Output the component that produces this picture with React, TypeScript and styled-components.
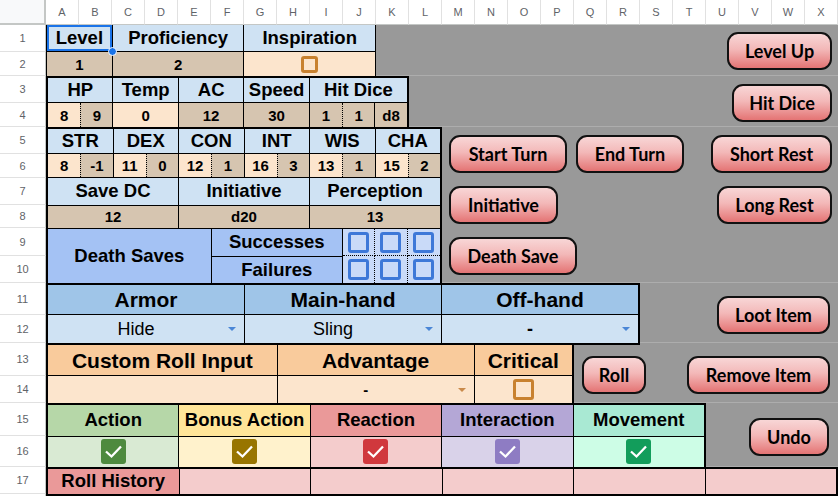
import styled, { createGlobalStyle } from "styled-components";

const GlobalStyle = createGlobalStyle`
  html, body {
    margin: 0;
    padding: 0;
    background: #fff;
  }
  body {
    font-family: "Liberation Sans", Arial, sans-serif;
    color: #000;
  }
`;

const COLUMNS = "ABCDEFGHIJKLMNOPQRSTUVWX".split("");
const ROW_HEIGHTS = [27, 24, 27, 24, 27, 24, 27, 23, 28, 27, 32, 28, 33, 27, 33, 31, 27, 27];

const HEAD_BLUE = "#cfe2f3";
const TAN = "#d6c5b0";
const PEACH = "#fce5cd";
const DEATH_BLUE = "#a4c2f4";
const PALE_BLUE = "#c9daf8";

const Sheet = styled.div`
  display: grid;
  grid-template-columns: 46px repeat(24, 33px);
  grid-template-rows: 25px ${ROW_HEIGHTS.map((h) => `${h}px`).join(" ")};
  width: 838px;
  height: 496px;
  overflow: hidden;
  background: #fff;
`;

const Corner = styled.div`
  grid-column: 1;
  grid-row: 1;
  background: #f8f9fa;
  border-right: 2px solid #c4c7c5;
  border-bottom: 2px solid #c4c7c5;
`;

const ColHead = styled.div<{ $col: number }>`
  grid-column: ${(p) => p.$col + 1};
  grid-row: 1;
  display: flex;
  align-items: center;
  justify-content: center;
  font-size: 11px;
  color: #5f6368;
  border-right: 1px solid #e1e1e1;
  border-bottom: 1px solid #c4c7c5;
`;

const RowHead = styled.div<{ $row: number }>`
  grid-column: 1;
  grid-row: ${(p) => p.$row + 1};
  display: flex;
  align-items: center;
  justify-content: center;
  font-size: 11px;
  color: #5f6368;
  border-right: 1px solid #c4c7c5;
  border-bottom: 1px solid #e1e1e1;
`;

type Area = { $col: number; $span: number; $row: number; $rows?: number };

const Band = styled.div<Area & { $tracks: string; $thin?: boolean; $z?: number }>`
  grid-column: ${(p) => p.$col + 1} / span ${(p) => p.$span};
  grid-row: ${(p) => p.$row + 1} / span ${(p) => p.$rows ?? 1};
  position: relative;
  z-index: ${(p) => p.$z ?? 1};
  display: grid;
  grid-template-columns: repeat(${(p) => p.$span}, minmax(0, 1fr));
  grid-template-rows: ${(p) => p.$tracks};
  gap: 1px;
  background: #000;
  border: solid #000;
  border-width: ${(p) => (p.$thin ? "0 1px" : "2px 2px 0")};
  box-shadow: 0 2px 0 #000;
`;

const Cell = styled.div<{
  $c: number;
  $cs?: number;
  $r?: number;
  $rs?: number;
  $bg: string;
  $size?: number;
  $regular?: boolean;
  $pr?: number;
}>`
  grid-column: ${(p) => p.$c} / span ${(p) => p.$cs ?? 1};
  grid-row: ${(p) => p.$r ?? 1} / span ${(p) => p.$rs ?? 1};
  position: relative;
  display: flex;
  align-items: center;
  justify-content: center;
  min-width: 0;
  padding-right: ${(p) => p.$pr ?? 0}px;
  background: ${(p) => p.$bg};
  font-size: ${(p) => p.$size ?? 18.5}px;
  font-weight: ${(p) => (p.$regular ? 400 : 700)};
  line-height: 1;
  white-space: nowrap;
`;

const SelectedCell = styled(Cell)`
  z-index: 3;
  box-shadow: inset 0 0 0 2px #1a73e8;

  &::after {
    content: "";
    position: absolute;
    right: -5px;
    bottom: -5px;
    width: 7px;
    height: 7px;
    border-radius: 50%;
    background: #1a73e8;
    border: 1px solid #fff;
  }
`;

const Pair = styled.div<{ $c: number; $r?: number }>`
  grid-column: ${(p) => p.$c} / span 2;
  grid-row: ${(p) => p.$r ?? 1};
  display: grid;
  grid-template-columns: 1fr 1fr;
`;

const Half = styled.div<{ $bg: string }>`
  display: flex;
  align-items: center;
  justify-content: center;
  background: ${(p) => p.$bg};
  font-size: 15px;
  font-weight: 700;

  & + & {
    border-left: 1px dotted #000;
  }
`;

const Arrow = styled.span<{ $color: string }>`
  position: absolute;
  right: 8px;
  top: 50%;
  margin-top: -2px;
  border-left: 4px solid transparent;
  border-right: 4px solid transparent;
  border-top: 4px solid ${(p) => p.$color};
`;

const Box = styled.span<{ $size: number; $color: string; $fill?: string }>`
  display: block;
  box-sizing: border-box;
  width: ${(p) => p.$size}px;
  height: ${(p) => p.$size}px;
  border: 3px solid ${(p) => p.$color};
  border-radius: 3px;
  background: ${(p) => p.$fill ?? "transparent"};
`;

const Tick = styled.span<{ $color: string }>`
  display: flex;
  align-items: center;
  justify-content: center;
  width: 25px;
  height: 25px;
  border-radius: 3px;
  background: ${(p) => p.$color};
`;

const SaveGrid = styled.div`
  grid-column: 10 / span 3;
  grid-row: 5 / span 2;
  display: grid;
  grid-template-columns: repeat(3, 1fr);
  grid-template-rows: 28fr 27fr;
  background: ${PALE_BLUE};
`;

const SaveSlot = styled.div`
  display: flex;
  align-items: center;
  justify-content: center;
  border-right: 1px dotted #000;
  border-bottom: 1px dotted #000;

  &:nth-child(3n) {
    border-right: none;
  }
  &:nth-child(n + 4) {
    border-bottom: none;
  }
`;

const Gray = styled.div<Area & { $pad?: string; $justify?: string }>`
  grid-column: ${(p) => p.$col + 1} / span ${(p) => p.$span};
  grid-row: ${(p) => p.$row + 1} / span ${(p) => p.$rows ?? 1};
  display: flex;
  align-items: center;
  justify-content: ${(p) => p.$justify ?? "flex-end"};
  box-sizing: border-box;
  padding: ${(p) => p.$pad ?? "0 6px"};
  background: #999;
  border-bottom: 1px solid #adadad;
`;

const Panel = styled(Gray)`
  flex-direction: column;
  align-items: stretch;
  justify-content: flex-start;
  gap: 13px;
`;

const BtnRow = styled.div`
  display: flex;
  gap: 9px;
`;

const Spacer = styled.div`
  flex: 1;
`;

const Btn = styled.button<{ $w: number }>`
  width: ${(p) => p.$w}px;
  height: 38px;
  flex: none;
  box-sizing: border-box;
  padding: 0;
  border: 2px solid #111;
  border-radius: 11px;
  background: linear-gradient(to bottom, #f8d6d6 0%, #f3b8b8 45%, #e47474 100%);
  font-family: Lato, "Open Sans", sans-serif;
  font-size: 18px;
  font-weight: 700;
  color: #000;
  cursor: pointer;
`;

const Check = () => (
  <svg width="25" height="25" viewBox="0 0 25 25">
    <polyline points="5,12.5 10.5,17.5 20,7.5" fill="none" stroke="#fff" strokeWidth="2.3" />
  </svg>
);

const TURN = [
  { label: "Action", head: "#b6d7a8", body: "#d9ead3", tick: "#4e8a3e" },
  { label: "Bonus Action", head: "#ffe599", body: "#fff2cc", tick: "#987500" },
  { label: "Reaction", head: "#ea9999", body: "#f4cccc", tick: "#d0383d" },
  { label: "Interaction", head: "#b4a7d6", body: "#d9d2e9", tick: "#8e7cc3" },
  { label: "Movement", head: "#a9e9d3", body: "#cdfde6", tick: "#129d5b" },
];

const ABILITIES = [
  ["STR", "8", "-1"],
  ["DEX", "11", "0"],
  ["CON", "12", "1"],
  ["INT", "16", "3"],
  ["WIS", "13", "1"],
  ["CHA", "15", "2"],
];

export default function App() {
  return (
    <>
      <GlobalStyle />
      <Sheet>
        <Corner />
        {COLUMNS.map((c, i) => (
          <ColHead key={c} $col={i + 1}>
            {c}
          </ColHead>
        ))}
        {ROW_HEIGHTS.map((_, i) => (
          <RowHead key={i} $row={i + 1}>
            {i < 17 ? i + 1 : ""}
          </RowHead>
        ))}

        {/* rows 1-2 */}
        <Band $col={1} $span={10} $row={1} $rows={2} $tracks="27fr 24fr" $thin $z={2}>
          <SelectedCell $c={1} $cs={2} $bg={HEAD_BLUE}>Level</SelectedCell>
          <Cell $c={3} $cs={4} $bg={HEAD_BLUE}>Proficiency</Cell>
          <Cell $c={7} $cs={4} $bg={HEAD_BLUE}>Inspiration</Cell>
          <Cell $c={1} $cs={2} $r={2} $bg={TAN} $size={15}>1</Cell>
          <Cell $c={3} $cs={4} $r={2} $bg={TAN} $size={15}>2</Cell>
          <Cell $c={7} $cs={4} $r={2} $bg={PEACH}>
            <Box $size={17} $color="#c8812f" />
          </Cell>
        </Band>
        <Gray $col={11} $span={14} $row={1} $rows={2} $pad="1px 6px 0">
          <Btn $w={105}>Level Up</Btn>
        </Gray>

        {/* rows 3-4 */}
        <Band $col={1} $span={11} $row={3} $rows={2} $tracks="25fr 24fr">
          <Cell $c={1} $cs={2} $bg={HEAD_BLUE}>HP</Cell>
          <Cell $c={3} $cs={2} $bg={HEAD_BLUE}>Temp</Cell>
          <Cell $c={5} $cs={2} $bg={HEAD_BLUE}>AC</Cell>
          <Cell $c={7} $cs={2} $bg={HEAD_BLUE}>Speed</Cell>
          <Cell $c={9} $cs={3} $bg={HEAD_BLUE}>Hit Dice</Cell>
          <Pair $c={1} $r={2}>
            <Half $bg={PEACH}>8</Half>
            <Half $bg={TAN}>9</Half>
          </Pair>
          <Cell $c={3} $cs={2} $r={2} $bg={PEACH} $size={15}>0</Cell>
          <Cell $c={5} $cs={2} $r={2} $bg={TAN} $size={15}>12</Cell>
          <Cell $c={7} $cs={2} $r={2} $bg={TAN} $size={15}>30</Cell>
          <Pair $c={9} $r={2}>
            <Half $bg={TAN}>1</Half>
            <Half $bg={TAN}>1</Half>
          </Pair>
          <Cell $c={11} $r={2} $bg={TAN} $size={15}>d8</Cell>
        </Band>
        <Gray $col={12} $span={13} $row={3} $rows={2} $pad="3px 6px 0">
          <Btn $w={100}>Hit Dice</Btn>
        </Gray>

        {/* rows 5-10 */}
        <Band $col={1} $span={12} $row={5} $rows={6} $tracks="25fr 24fr 27fr 23fr 28fr 27fr">
          {ABILITIES.map(([name], i) => (
            <Cell key={name} $c={i * 2 + 1} $cs={2} $bg={HEAD_BLUE}>
              {name}
            </Cell>
          ))}
          {ABILITIES.map(([name, score, mod], i) => (
            <Pair key={name} $c={i * 2 + 1} $r={2}>
              <Half $bg={PEACH}>{score}</Half>
              <Half $bg={TAN}>{mod}</Half>
            </Pair>
          ))}
          <Cell $c={1} $cs={4} $r={3} $bg={HEAD_BLUE}>Save DC</Cell>
          <Cell $c={5} $cs={4} $r={3} $bg={HEAD_BLUE}>Initiative</Cell>
          <Cell $c={9} $cs={4} $r={3} $bg={HEAD_BLUE}>Perception</Cell>
          <Cell $c={1} $cs={4} $r={4} $bg={TAN} $size={15}>12</Cell>
          <Cell $c={5} $cs={4} $r={4} $bg={TAN} $size={15}>d20</Cell>
          <Cell $c={9} $cs={4} $r={4} $bg={TAN} $size={15}>13</Cell>
          <Cell $c={1} $cs={5} $r={5} $rs={2} $bg={DEATH_BLUE}>Death Saves</Cell>
          <Cell $c={6} $cs={4} $r={5} $bg={DEATH_BLUE}>Successes</Cell>
          <Cell $c={6} $cs={4} $r={6} $bg={DEATH_BLUE}>Failures</Cell>
          <SaveGrid>
            {[0, 1, 2, 3, 4, 5].map((i) => (
              <SaveSlot key={i}>
                <Box $size={21} $color="#3d78d8" $fill={PALE_BLUE} />
              </SaveSlot>
            ))}
          </SaveGrid>
        </Band>
        <Panel $col={13} $span={12} $row={5} $rows={6} $pad="8px 6px 0 7px">
          <BtnRow>
            <Btn $w={118}>Start Turn</Btn>
            <Btn $w={108}>End Turn</Btn>
            <Spacer />
            <Btn $w={121}>Short Rest</Btn>
          </BtnRow>
          <BtnRow>
            <Btn $w={109}>Initiative</Btn>
            <Spacer />
            <Btn $w={115}>Long Rest</Btn>
          </BtnRow>
          <BtnRow>
            <Btn $w={128}>Death Save</Btn>
          </BtnRow>
        </Panel>

        {/* rows 11-12 */}
        <Band $col={1} $span={18} $row={11} $rows={2} $tracks="30fr 28fr">
          <Cell $c={1} $cs={6} $bg="#9fc5e8" $size={21}>Armor</Cell>
          <Cell $c={7} $cs={6} $bg="#9fc5e8" $size={21}>Main-hand</Cell>
          <Cell $c={13} $cs={6} $bg="#9fc5e8" $size={21}>Off-hand</Cell>
          <Cell $c={1} $cs={6} $r={2} $bg={HEAD_BLUE} $size={18} $regular $pr={20}>
            Hide
            <Arrow $color="#4a86d6" />
          </Cell>
          <Cell $c={7} $cs={6} $r={2} $bg={HEAD_BLUE} $size={18} $regular $pr={20}>
            Sling
            <Arrow $color="#4a86d6" />
          </Cell>
          <Cell $c={13} $cs={6} $r={2} $bg={HEAD_BLUE} $size={18} $pr={20}>
            -
            <Arrow $color="#4a86d6" />
          </Cell>
        </Band>
        <Gray $col={19} $span={6} $row={11} $rows={2} $pad="4px 8px 0">
          <Btn $w={113}>Loot Item</Btn>
        </Gray>

        {/* rows 13-14 */}
        <Band $col={1} $span={16} $row={13} $rows={2} $tracks="31fr 27fr">
          <Cell $c={1} $cs={7} $bg="#f9cb9c" $size={21}>Custom Roll Input</Cell>
          <Cell $c={8} $cs={6} $bg="#f9cb9c" $size={21}>Advantage</Cell>
          <Cell $c={14} $cs={3} $bg="#f9cb9c" $size={21}>Critical</Cell>
          <Cell $c={1} $cs={7} $r={2} $bg={PEACH} />
          <Cell $c={8} $cs={6} $r={2} $bg={PEACH} $size={15} $pr={20}>
            -
            <Arrow $color="#c98a4b" />
          </Cell>
          <Cell $c={14} $cs={3} $r={2} $bg={PEACH}>
            <Box $size={21} $color="#c8812f" />
          </Cell>
        </Band>
        <Gray $col={17} $span={8} $row={13} $rows={2} $pad="4px 8px 0" $justify="space-between">
          <Btn $w={64}>Roll</Btn>
          <Btn $w={143}>Remove Item</Btn>
        </Gray>

        {/* rows 15-16 */}
        <Band $col={1} $span={20} $row={15} $rows={2} $tracks="31fr 31fr">
          {TURN.map((t, i) => (
            <Cell key={t.label} $c={i * 4 + 1} $cs={4} $bg={t.head}>
              {t.label}
            </Cell>
          ))}
          {TURN.map((t, i) => (
            <Cell key={t.label} $c={i * 4 + 1} $cs={4} $r={2} $bg={t.body}>
              <Tick $color={t.tick}>
                <Check />
              </Tick>
            </Cell>
          ))}
        </Band>
        <Gray $col={21} $span={4} $row={15} $rows={2} $pad="4px 9px 0">
          <Btn $w={80}>Undo</Btn>
        </Gray>

        {/* row 17 */}
        <Band $col={1} $span={24} $row={17} $tracks="1fr">
          <Cell $c={1} $cs={4} $bg="#ea9999">Roll History</Cell>
          {[5, 9, 13, 17, 21].map((c) => (
            <Cell key={c} $c={c} $cs={4} $bg="#f4cccc" />
          ))}
        </Band>
      </Sheet>
    </>
  );
}
